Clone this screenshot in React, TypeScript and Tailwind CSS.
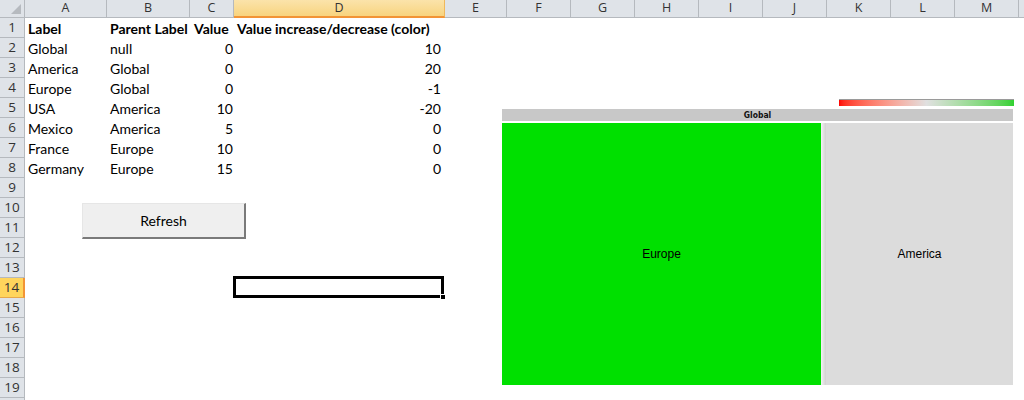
import React from 'react';

type Row = [string, string, string, string];

const cols = [
  { key: 'A', w: 82 },
  { key: 'B', w: 83 },
  { key: 'C', w: 44 },
  { key: 'D', w: 211 },
  { key: 'E', w: 62 },
  { key: 'F', w: 64 },
  { key: 'G', w: 64 },
  { key: 'H', w: 64 },
  { key: 'I', w: 64 },
  { key: 'J', w: 64 },
  { key: 'K', w: 64 },
  { key: 'L', w: 64 },
  { key: 'M', w: 64 },
];

const data: Row[] = [
  ['Label', 'Parent Label', 'Value', 'Value increase/decrease (color)'],
  ['Global', 'null', '0', '10'],
  ['America', 'Global', '0', '20'],
  ['Europe', 'Global', '0', '-1'],
  ['USA', 'America', '10', '-20'],
  ['Mexico', 'America', '5', '0'],
  ['France', 'Europe', '10', '0'],
  ['Germany', 'Europe', '15', '0'],
];

const gridCols = 'grid grid-cols-[25px_82px_83px_44px_211px_62px_64px_64px_64px_64px_64px_64px_64px_64px_1fr]';

function CornerCell() {
  return (
    <div className="h-[18px] bg-[#dfe3e8] border-r border-b border-[#b5b9be] relative">
      <svg width="12" height="12" className="absolute right-[2px] bottom-[2px]">
        <polygon points="11,1 11,11 1,11" fill="#b6babf" />
      </svg>
    </div>
  );
}

function ColHeader({ label, active }: { label: string; active?: boolean }) {
  return (
    <div
      className={
        active
          ? 'h-[18px] flex items-center justify-center bg-gradient-to-b from-[#fbe3aa] to-[#f8d47e] border-r border-b-2 border-r-[#f0b85a] border-b-[#f29436] text-[12.5px] text-[#333]'
          : 'h-[18px] flex items-center justify-center bg-[#dfe3e8] border-r border-b border-[#b5b9be] text-[12.5px] text-[#333]'
      }
    >
      {label}
    </div>
  );
}

function RowHeader({ n, active }: { n?: number; active?: boolean }) {
  return (
    <div
      className={
        active
          ? 'h-[20px] flex items-center justify-center bg-[#ffd55c] border-r-2 border-b border-r-[#f29436] border-b-[#e6a84a] text-[13.5px] text-[#333]'
          : 'h-[20px] flex items-center justify-center bg-[#dfe3e8] border-r border-b border-[#b5b9be] text-[13.5px] text-[#333]'
      }
    >
      {n}
    </div>
  );
}

function Treemap() {
  return (
    <div className="absolute left-[502px] top-[99px] w-[512px] flex flex-col">
      <div className="flex justify-end">
        <div className="w-[175px] h-[7px] border-t border-[#9a9a9a] bg-gradient-to-r from-[#ff0000] via-[#e0e0e0] to-[#2fd12f]" />
      </div>
      <div className="mt-[3px] h-[12px] w-[511px] bg-[#c8c8c8] flex items-center justify-center">
        <span className="font-['DejaVu_Sans_Condensed','Liberation_Sans',sans-serif] font-bold text-[8.5px] leading-none text-[#111]">
          Global
        </span>
      </div>
      <div className="mt-[2px] flex h-[262px] w-[511px]">
        <div className="w-[319px] bg-[#00e000] flex items-center justify-center">
          <span className="font-['Liberation_Sans',sans-serif] text-[12px] text-black">Europe</span>
        </div>
        <div className="w-[5px] bg-gradient-to-r from-[#f4f4f4] to-[#d2d2d2]" />
        <div className="flex-1 bg-[#dcdcdc] flex items-center justify-center">
          <span className="font-['Liberation_Sans',sans-serif] text-[12px] text-black">America</span>
        </div>
      </div>
    </div>
  );
}

export default function App() {
  const rows = Array.from({ length: 20 }, (_, i) => i + 1);

  return (
    <div className="relative w-[1024px] h-[400px] overflow-hidden bg-white font-['Open_Sans','Liberation_Sans',sans-serif]">
      <div className={gridCols}>
        <CornerCell />
        {cols.map((c) => (
          <ColHeader key={c.key} label={c.key} active={c.key === 'D'} />
        ))}
        <div className="h-[18px] bg-[#dfe3e8] border-b border-[#b5b9be]" />

        {rows.map((n) => {
          const r = data[n - 1];
          const bold = n === 1;
          const cellText = `h-[20px] flex items-center pt-[1px] font-['Lato',sans-serif] text-[14px] text-black whitespace-nowrap ${
            bold ? 'font-bold' : ''
          }`;
          return (
            <React.Fragment key={n}>
              <RowHeader n={n < 20 ? n : undefined} active={n === 14} />
              <div className={`${cellText} pl-[3px]`}>{r ? r[0] : ''}</div>
              <div className={`${cellText} pl-[3px]`}>{r ? r[1] : ''}</div>
              <div className={`${cellText} ${bold ? 'pl-[4px]' : 'justify-end pr-[1px]'}`}>
                {r ? r[2] : ''}
              </div>
              <div className={`${cellText} relative ${bold ? 'pl-[3px]' : 'justify-end pr-[4px]'}`}>
                {r ? r[3] : ''}
                {n === 14 && (
                  <div className="absolute left-[-1px] top-[-2px] w-[211px] h-[22px] border-[3px] border-black">
                    <div className="absolute right-[-5px] bottom-[-5px] w-[6px] h-[6px] bg-black border border-white" />
                  </div>
                )}
              </div>
              {Array.from({ length: 10 }, (_, i) => (
                <div key={i} className="h-[20px]" />
              ))}
            </React.Fragment>
          );
        })}
      </div>

      <button className="absolute left-[82px] top-[203px] w-[164px] h-[36px] bg-[#efefef] border-t border-l border-[#e6e6e6] border-r-2 border-b-2 border-r-[#7a7a7a] border-b-[#7a7a7a] font-['Lato',sans-serif] text-[14px] text-black">
        Refresh
      </button>

      <Treemap />
    </div>
  );
}
